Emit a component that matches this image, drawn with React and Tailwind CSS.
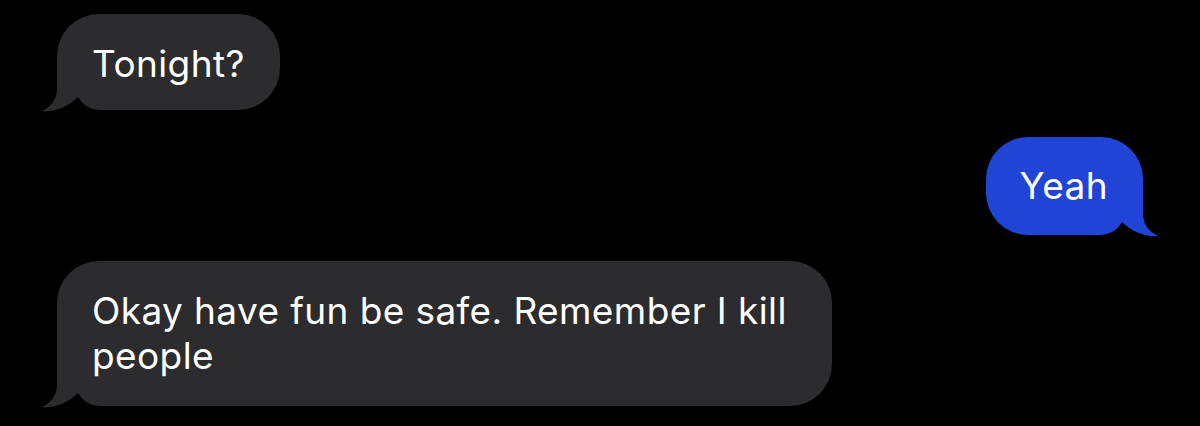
// tail drawn over the bubble's bottom corner; black fill carves the little notch
const Tail = ({ color, side }) => (
  <svg
    width="60"
    height="46"
    viewBox="0 0 60 46"
    className={
      side === 'left'
        ? 'absolute left-[-16px] bottom-[-2px]'
        : 'absolute right-[-16px] bottom-[-2px] scale-x-[-1]'
    }
  >
    <rect x="16" y="0" width="44" height="46" fill="#000" />
    <path
      d="M16 0 L16 22 C16 33 11 40 1 45 C12 46.5 27 41 37 31 C42 39 49 44 60 44 L60 0 Z"
      fill={color}
    />
  </svg>
);

const Bubble = ({ side, color, className, children }) => (
  <div
    className={`relative rounded-[42px] text-white text-[37px] tracking-[0.4px] ${className}`}
    style={{ backgroundColor: color }}
  >
    <Tail color={color} side={side} />
    <div className="relative">{children}</div>
  </div>
);

export default function App() {
  return (
    <div
      className="w-[1200px] h-[426px] bg-black overflow-hidden flex flex-col"
      style={{ fontFamily: 'Inter, "Noto Sans", sans-serif' }}
    >
      {/* incoming */}
      <div className="pl-[57px] pt-[14px]">
        <Bubble side="left" color="#2c2c2e" className="inline-flex items-center h-[96px] px-[35px] pt-[4px]">
          Tonight?
        </Bubble>
      </div>

      {/* outgoing */}
      <div className="flex justify-end pr-[57px] mt-[27px]">
        <Bubble side="right" color="#1f44d6" className="flex items-center h-[98px] pl-[34px] pr-[35px]">
          Yeah
        </Bubble>
      </div>

      {/* incoming, two lines */}
      <div className="pl-[57px] mt-[26px]">
        <Bubble side="left" color="#2c2c2e" className="w-[775px] h-[145px] px-[35px] pt-[27px] leading-[45px]">
          Okay have fun be safe. Remember I kill people
        </Bubble>
      </div>
    </div>
  );
}
